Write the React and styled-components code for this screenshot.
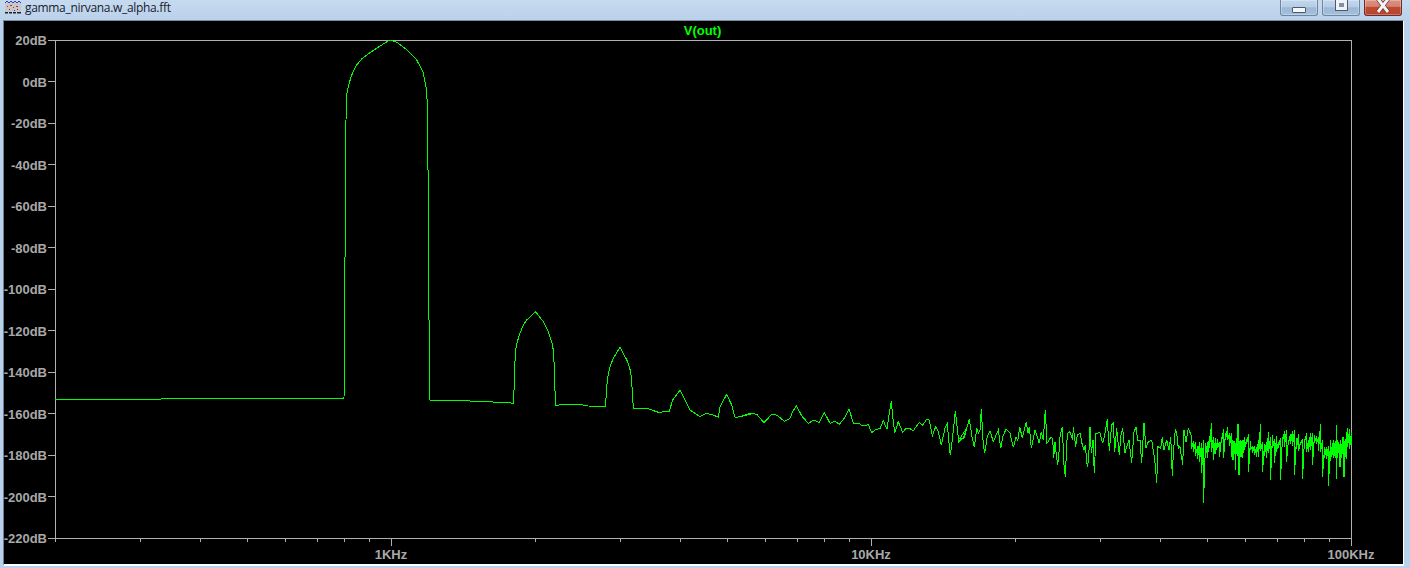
import React from "react";
import styled, { createGlobalStyle } from "styled-components";

const Global = createGlobalStyle`
  html, body { margin: 0; padding: 0; background: #b9d1ea; overflow: hidden; }
  #root { width: 1410px; height: 568px; }
`;

const Window = styled.div`
  width: 1410px; height: 568px; display: flex; flex-direction: column;
  background: linear-gradient(#c6daef, #b8d0ea 24px, #b9d1ea);
  box-sizing: border-box; padding: 0 6px 2px 3px;
`;
const TitleBar = styled.div`
  height: 20px; flex: none; display: flex; align-items: flex-start; padding-left: 1px;
`;
const AppIcon = styled.svg`width: 18px; height: 15px; flex: none; display: block;`;
const Title = styled.div`
  margin-left: 3px; font: 12px/15px "Open Sans", "Noto Sans", sans-serif;
  color: #17212c; letter-spacing: -0.32px; white-space: nowrap;
`;
const Controls = styled.div`
  margin-left: auto; display: flex; gap: 4px; margin-right: 2px;
`;
const CtlButton = styled.div`
  width: ${p => p.$w}px; height: 16px; box-sizing: border-box; display: flex;
  align-items: flex-start; justify-content: center;
  border: 1px solid ${p => (p.$close ? "#6e2a2e" : "#6d86a3")}; border-top: none;
  border-radius: 0 0 3px 3px;
  background: ${p => p.$close
    ? "linear-gradient(#dc9082 0, #d68272 42%, #bf4a30 50%, #b8432a 100%)"
    : "linear-gradient(#c3d7ec 0, #b6cde6 45%, #9db8d5 52%, #a4bfdc 100%)"};
  box-shadow: inset 0 0 0 1px rgba(255,255,255,.28);
`;
const MinGlyph = styled.div`
  width: 12px; height: 4px; margin-top: 7px; background: #f4f6f8;
  border: 1px solid #4b5a6c; border-radius: 1px;
`;
const MaxGlyph = styled.div`
  width: 5px; height: 4px; background: #7f91a8; border: 3px solid #f0f3f6;
  outline: 1px solid #4b5a6c; margin-top: 0;
`;
const CloseGlyph = styled.svg`width: 18px; height: 14px; display: block;`;
const Panel = styled.div`
  flex: 1; min-height: 0; background: #000; box-sizing: border-box;
  border-left: 1px solid #6f8092; border-top: 1px solid #7d8b9a;
  border-right: 1px solid #fff; border-bottom: 2px solid #fff;
`;
const Plot = styled.svg`display: block; width: 100%; height: 100%;`;
const AxisLine = styled.path`fill: none; stroke: #b0b0b0; stroke-width: 1; shape-rendering: crispEdges;`;
const Trace = styled.polyline`fill: none; stroke: #00ff00; stroke-width: 1; shape-rendering: crispEdges;`;
const Label = styled.text`
  font: bold 13px "Liberation Sans", Arial, sans-serif; fill: #a8a8a8;
  text-anchor: ${p => p.$anchor || "middle"};
`;
const TraceName = styled.text`
  font: bold 13px "Liberation Sans", Arial, sans-serif; fill: #00ff00; text-anchor: middle;
`;

const conv = (ox, oy, arr) => arr.map(([x, y]) => [ox + x / 3, oy + y / 3]);

const head = [
  [55, 399.5], [160, 399.5], [162, 398.5], [344, 398.5], [344.6, 320], [345.6, 170], [346, 120], [346.7, 95], [348, 88], [350.7, 78],
  [353, 72], [356.7, 65], [361.7, 59], [370, 52.7], [381.7, 45], [388, 41], [391.7, 40.3], [398, 43],
  [408, 50.7], [416.7, 60], [423, 71.7], [426.7, 90], [427.7, 120], [428, 170], [429, 320], [430, 400],
  [470, 401], [500, 402.3],
];
const z5 = conv(500, 300, [[20,307],[40,310],[42,272],[44,200],[47,150],[52,125],[60,100],[70,75],[80,60],[107,35],[130,65],[145,95],[155,125],[160,150],[163,200],[165,272],[167,316],[185,314],[215,312],[225,312],[245,314],[265,318],[315,320],[318,295],[320,260],[323,232],[330,200],[340,175],[360,142],[382,183],[392,215],[396,260],[400,325],[440,325],[475,337],[508,334],[518,300],[540,271],[570,330],[600,350],[620,340],[640,345],[655,352],[660,320],[680,283],[695,315],[705,352],[725,350],[745,341],[760,340]]);
const z6 = conv(740, 380, [[0,110],[30,100],[50,103],[72,128],[95,103],[112,106],[133,124],[150,115],[158,95],[169,78],[187,110],[205,130],[222,120],[237,128],[253,97],[270,130],[285,124],[298,133],[315,112],[327,87],[340,129],[355,129],[368,138],[385,134],[395,158],[408,148],[420,146],[430,122],[441,148],[447,105],[454,64],[458,110],[464,158],[475,125],[488,157],[497,146],[510,146],[520,152],[538,127],[548,136],[560,118],[568,120],[577,168],[587,140],[595,155],[604,195],[615,145],[622,130],[626,180],[631,226],[637,180],[646,94],[650,130],[656,185],[670,173],[680,145]]);
const z7 = conv(960, 390, [[0,145],[12,145],[20,115],[28,88],[36,140],[43,172],[50,115],[55,130],[60,120],[64,58],[70,165],[74,188],[82,140],[90,122],[100,155],[115,120],[122,175],[128,140],[138,118],[150,130],[160,172],[168,142],[173,152],[179,110],[187,145],[199,95],[204,130],[208,110],[214,175],[225,120],[238,160],[244,125],[250,150],[256,60],[261,160],[272,142],[278,145],[281,205],[285,155],[290,205],[293,225],[296,200],[300,140],[307,110],[312,225],[316,260],[322,130],[330,125],[338,150],[340,110],[347,170],[352,135],[360,130],[367,165],[372,180],[376,165],[380,210],[382,232],[386,205],[390,110],[394,190],[399,150],[403,250],[408,130],[420,128],[428,160],[435,130],[442,88],[448,182],[455,105],[460,100],[464,185],[470,115],[478,195],[482,140],[488,115],[495,190],[500,170],[507,150],[515,218],[522,125],[528,112],[533,150],[540,150],[545,218],[552,100],[558,175],[565,155],[575,150],[582,195],[586,225],[590,280],[594,170],[602,175],[607,142],[612,180],[620,150],[627,180],[632,140],[637,258],[640,190],[646,118],[650,130],[655,175],[660,170],[668,225],[672,120],[678,155],[685,115]]);

// Dense tail: thin spikes with gaps between them, the visible spikes fixed in place; two clusters are solid.
function tail() {
  let s = 98765;
  const rnd = () => {
    s = (s + 0x6d2b79f5) | 0;
    let t = Math.imul(s ^ (s >>> 15), 1 | s);
    t = (t + Math.imul(t ^ (t >>> 7), 61 | t)) ^ t;
    return ((t ^ (t >>> 14)) >>> 0) / 4294967296;
  };
  const tops = { 42:82,95:68,137:100,172:72,213:72,241:72,264:95,295:125,342:90,375:92,421:72,468:75,503:85,13:88,27:85,90:100,152:100,187:120,322:120,360:125,395:100,405:105,452:120,488:110,498:95 };
  const bots = { 68:310,65:220,100:180,130:175,165:210,175:225,203:215,245:215,268:240,302:240,340:225,367:237,425:232,442:258,468:237,490:232,55:185,115:170,158:180,225:165,280:190,320:185,395:195,435:210,478:200 };
  const out = [];
  let drift = 130;
  let px = 33;
  while (px <= 513) {
    const x = Math.floor(1180 + px / 3) + 0.5;
    const dense = (px > 150 && px < 190) || (px > 450 && px < 500);
    drift += (rnd() - 0.5) * 22;
    drift = Math.max(112, Math.min(155, drift));
    let top = dense ? 118 + rnd() * 14 : drift - 4 - rnd() * 26;
    let bot = dense ? 155 + rnd() * 22 : drift + 4 + rnd() * 30;
    for (const k in tops) if (Math.abs(k - px) < 3) top = tops[k];
    for (const k in bots) if (Math.abs(k - px) < 3) bot = bots[k];
    out.push([x, 400 + top / 3], [x, 400 + bot / 3]);
    px += dense ? 3 : 6;
  }
  return out;
}

const tracePoints = [...head, ...z5, ...z6, ...z7, ...tail()]
  .map(([x, y]) => `${x.toFixed(1)},${y.toFixed(1)}`).join(" ");

const dbLabels = Array.from({ length: 13 }, (_, i) => ({ text: `${20 - i * 20}dB`, y: 40 + i * 41.5 }));
const xOf = f => 391 + 480 * Math.log10(f / 1000);
const minor = [];
[100, 1000, 10000].forEach(d => {
  for (let m = 2; m <= 9; m++) {
    const f = d * m;
    if (f >= 200) minor.push(Math.round(xOf(f)));
  }
});

const px = v => Math.floor(v) + 0.5;
const axisPath = [
  `M${px(55)} ${px(40)}H${px(1351)}V${px(538)}H${px(55)}Z`,
  ...dbLabels.map(d => `M48 ${px(d.y)}H55`),
  ...minor.map(x => `M${px(x)} 538V542`),
  ...[391, 871, 1351].map(x => `M${px(x)} 538V546`),
].join("");

export default function App() {
  return (
    <>
      <Global />
      <Window>
        <TitleBar>
          <AppIcon viewBox="0 0 18 15">
            <rect x="1" y="2" width="16" height="10" fill="#c8c8c8" />
            <path d="M1 3L3 1L5 3L7 1L9 3L11 1L13 3L15 1L17 3" fill="none" stroke="#2a3fd0" strokeWidth="1" />
            <path d="M3 6h1v1H3zM6 5h2v1H6zM9 7h1v1H9zM12 6h2v1h-2z" fill="#e02020" />
            <path d="M5 9h1v1H5zM10 10h1v1h-1zM13 9h1v1h-1z" fill="#2030c0" />
            <path d="M1 12h3v1.5H1zM5 12h3v1.5H5zM9 12h3v1.5H9zM13 12h4v1.5h-4z" fill="#222" />
          </AppIcon>
          <Title>gamma_nirvana.w_alpha.fft</Title>
          <Controls>
            <CtlButton $w={38}><MinGlyph /></CtlButton>
            <CtlButton $w={38}><MaxGlyph /></CtlButton>
            <CtlButton $w={38} $close>
              <CloseGlyph viewBox="0 0 18 14">
                <path d="M4 -1L14 12M14 -1L4 12" fill="none" stroke="#5a3038" strokeWidth="4.4" />
                <path d="M4 -1L14 12M14 -1L4 12" fill="none" stroke="#f4f4f4" strokeWidth="3" />
              </CloseGlyph>
            </CtlButton>
          </Controls>
        </TitleBar>
        <Panel>
          <Plot viewBox="4 21 1399 543" preserveAspectRatio="none">
            <AxisLine d={axisPath} />
            <Trace points={tracePoints} />
            <TraceName x="702.5" y="35">V(out)</TraceName>
            {dbLabels.map(d => (
              <Label key={d.text} x="47" y={d.y + 5} $anchor="end">{d.text}</Label>
            ))}
            <Label x="391" y="559">1KHz</Label>
            <Label x="871" y="559">10KHz</Label>
            <Label x="1351" y="559">100KHz</Label>
          </Plot>
        </Panel>
      </Window>
    </>
  );
}
